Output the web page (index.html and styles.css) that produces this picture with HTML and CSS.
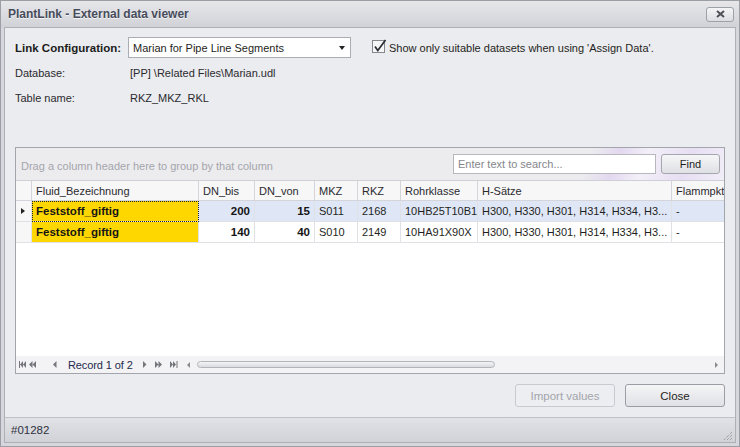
FILE: index.html
```html
<!DOCTYPE html>
<html>
<head>
<meta charset="utf-8">
<title>PlantLink - External data viewer</title>
<link rel="stylesheet" href="styles.css">
</head>
<body>
<div class="window">
  <div class="titlebar">
    <span class="title">PlantLink - External data viewer</span>
    <span class="closebtn"><svg width="9" height="8" viewBox="0 0 9 8"><path d="M1 1L8 7M8 1L1 7" stroke="#4e5058" stroke-width="2" fill="none"/></svg></span>
  </div>
  <div class="client">
    <div class="content">
      <div class="row-config">
        <span class="lbl-bold">Link Configuration:</span>
        <div class="combo"><span>Marian for Pipe Line Segments</span><span class="caret"></span></div>
        <label class="check">
          <svg class="checkbox" width="15" height="14" viewBox="0 0 15 14"><rect x="0.5" y="1.5" width="12" height="12" fill="#f6f6f7" stroke="#85878d"/><path d="M3 7.5L5.8 11.5L13.5 1" stroke="#2c2e33" stroke-width="1.7" fill="none"/></svg>
          <span>Show only suitable datasets when using 'Assign Data'.</span>
        </label>
      </div>
      <div class="row-info first"><span class="lbl">Database:</span><span class="val">[PP] \Related Files\Marian.udl</span></div>
      <div class="row-info second"><span class="lbl">Table name:</span><span class="val">RKZ_MKZ_RKL</span></div>

      <div class="grid">
        <div class="grouppanel">
          <span class="hint">Drag a column header here to group by that column</span>
          <div class="search">
            <span class="searchbox">Enter text to search...</span>
            <span class="findbtn">Find</span>
          </div>
        </div>
        <div class="grow header">
          <div class="cell ind"></div>
          <div class="cell">Fluid_Bezeichnung</div>
          <div class="cell">DN_bis</div>
          <div class="cell">DN_von</div>
          <div class="cell">MKZ</div>
          <div class="cell">RKZ</div>
          <div class="cell">Rohrklasse</div>
          <div class="cell">H-Sätze</div>
          <div class="cell">Flammpkt</div>
        </div>
        <div class="grow data focused">
          <div class="cell ind"><span class="rowarrow"></span></div>
          <div class="cell fluid focus">Feststoff_giftig</div>
          <div class="cell num">200</div>
          <div class="cell num">15</div>
          <div class="cell">S011</div>
          <div class="cell">2168</div>
          <div class="cell">10HB25T10B1</div>
          <div class="cell">H300, H330, H301, H314, H334, H3...</div>
          <div class="cell">-</div>
        </div>
        <div class="grow data">
          <div class="cell ind"></div>
          <div class="cell fluid">Feststoff_giftig</div>
          <div class="cell num">140</div>
          <div class="cell num">40</div>
          <div class="cell">S010</div>
          <div class="cell">2149</div>
          <div class="cell">10HA91X90X</div>
          <div class="cell">H300, H330, H301, H314, H334, H3...</div>
          <div class="cell">-</div>
        </div>
        <div class="gempty"></div>
        <div class="navbar">
          <svg class="nav n-first" width="7" height="7" viewBox="0 0 7 7"><path d="M0 0h1v7H0zM4 0v7L1 3.5zM7 0v7L4 3.5z"/></svg>
          <svg class="nav n-pprev" width="7" height="7" viewBox="0 0 7 7"><path d="M3.5 0v7L0 3.5zM7 0v7L3.5 3.5z"/></svg>
          <svg class="nav n-prev" width="4" height="7" viewBox="0 0 4 7"><path d="M3.5 0v7L0 3.5z"/></svg>
          <span class="record">Record 1 of 2</span>
          <svg class="nav n-next" width="4" height="7" viewBox="0 0 4 7"><path d="M0 0v7L3.5 3.5z"/></svg>
          <svg class="nav n-pnext" width="7" height="7" viewBox="0 0 7 7"><path d="M0 0v7L3.5 3.5zM3.5 0v7L7 3.5z"/></svg>
          <svg class="nav n-last" width="8" height="7" viewBox="0 0 8 7"><path d="M0 0v7L3 3.5zM3 0v7L6 3.5zM6.5 0h1v7h-1z"/></svg>
          <div class="hscroll">
            <svg class="sarrow" width="3" height="6" viewBox="0 0 3 6"><path d="M3 0v6L0 3z"/></svg>
            <span class="thumb"></span>
            <span class="track"></span>
            <svg class="sarrow" width="3" height="6" viewBox="0 0 3 6"><path d="M0 0v6L3 3z"/></svg>
          </div>
        </div>
      </div>

      <div class="buttons">
        <span class="btn disabled">Import values</span>
        <span class="btn">Close</span>
      </div>
    </div>
    <div class="statusbar">
      <span class="status">#01282</span>
      <svg class="grip" width="10" height="10" viewBox="0 0 10 10"><path d="M9 1L1 9M9 4L4 9M9 7L7 9" stroke="#8a8c93" stroke-width="1" stroke-dasharray="1 1" fill="none"/></svg>
    </div>
  </div>
</div>
</body>
</html>
```

FILE: styles.css
```css
* { box-sizing: border-box; }
html, body { margin: 0; padding: 0; }
body {
  width: 740px; height: 447px; overflow: hidden;
  font-family: "Liberation Sans", Arial, sans-serif;
  font-size: 11px; color: #1f1f22;
  background: #d5d6db;
}
.window {
  width: 740px; height: 447px;
  border: 1px solid #9c9ea6;
  background: #d6d7dc;
  display: flex; flex-direction: column;
}
.titlebar {
  height: 26px; flex: none;
  display: flex; align-items: center; justify-content: space-between;
  padding: 0 5px 0 7px;
  background: linear-gradient(#e7e7ea, #d1d2d7);
}
.title {
  font-weight: bold; font-size: 12px; color: #474c5b;
  text-shadow: 0 1px 0 rgba(255,255,255,0.75);
}
.closebtn {
  width: 28px; height: 15px;
  border: 1px solid #9fa1a8; border-radius: 3px;
  background: linear-gradient(#f5f5f7, #dcdde2);
  display: flex; align-items: center; justify-content: center;
}
.client {
  flex: 1;
  margin: 0 3px 3px;
  border: 1px solid #aeb0b7;
  background: #ebecef;
  display: flex; flex-direction: column;
}
.content {
  flex: 1;
  padding: 9px 10px 0;
  display: flex; flex-direction: column;
}
.row-config {
  height: 21px; display: flex; align-items: center;
}
.lbl-bold {
  width: 113px; font-weight: bold; font-size: 11.5px; color: #1c1c20;
}
.combo {
  width: 223px; height: 21px;
  border: 1px solid #abadb3; background: #fff;
  display: flex; align-items: center; justify-content: space-between;
  padding: 0 4px 0 4px;
}
.caret {
  width: 0; height: 0;
  border-left: 3.5px solid transparent; border-right: 3.5px solid transparent;
  border-top: 4px solid #222;
  margin-right: 1px;
}
.check {
  margin-left: 21px;
  display: flex; align-items: center;
}
.checkbox { margin-top: -3px; overflow: visible; }
.check span { margin-left: 2px; }
.row-info {
  height: 18px; display: flex; align-items: center; color: #2a2a2e;
}
.row-info.first { margin-top: 6px; }
.row-info.second { margin-top: 7px; }
.lbl { width: 115px; }

.grid {
  margin-top: 40px;
  height: 227px;
  border: 1px solid #a3a5ad;
  background: #fff;
  display: flex; flex-direction: column;
}
.grouppanel {
  height: 33px; flex: none;
  border-bottom: 1px solid #cfd0d5;
  display: flex; align-items: center; justify-content: space-between;
  padding: 0 4px 0 5px;
  background:
    linear-gradient(112deg, rgba(236,236,239,0) 0%, rgba(236,236,239,0) 80%, rgba(226,214,240,0.9) 84%, rgba(244,240,249,0.9) 88%, rgba(230,220,243,0.9) 94%, rgba(242,238,248,0.9) 100%),
    #ececef;
}
.hint { color: #a4a5ab; margin-top: 3px; }
.search { display: flex; align-items: center; gap: 5px; }
.searchbox {
  width: 203px; height: 20px;
  border: 1px solid #b6b8be; background: #fff;
  color: #85868c; padding-left: 4px;
  display: flex; align-items: center;
}
.findbtn {
  width: 59px; height: 20px;
  border: 1px solid #a5a7ae; border-radius: 3px;
  background: linear-gradient(#f6f6f8, #dfe0e4);
  display: flex; align-items: center; justify-content: center;
  color: #1f1f22;
}
.grow {
  display: grid; flex: none;
  grid-template-columns: 16px 167px 56px 60px 43px 43px 77px 194px 52px;
}
.grow.header { height: 20px; background: #f7f7f8; }
.grow.data { height: 21px; }
.cell {
  display: flex; align-items: center;
  padding: 0 4px;
  white-space: nowrap; overflow: hidden;
  border-right: 1px solid #dcdde1;
  border-bottom: 1px solid #dcdde1;
}
.cell:last-child { border-right: none; }
.header .cell { border-color: #d4d5da; color: #2a2a2e; }
.ind { padding: 0; justify-content: center; background: #f7f7f8; }
.header .ind { background: #f7f7f8; }
.focused .cell { background: #dfe7f7; }
.focused .ind { background: #f7f7f8; }
.data .cell { border-color: #e0e1e5; }
.cell.fluid { background: #ffd700 !important; font-weight: bold; font-size: 11.5px; color: #151515; }
.cell.focus { outline: 1px dotted #222; outline-offset: -1px; }
.cell.num { justify-content: flex-end; font-weight: bold; font-size: 11.5px; color: #151515; }
.rowarrow {
  width: 0; height: 0;
  border-top: 3.5px solid transparent; border-bottom: 3.5px solid transparent;
  border-left: 4px solid #222;
  margin-left: -1px;
}
.gempty { flex: 1; background: #fff; }
.navbar {
  height: 17px; flex: none;
  background: #f3f3f5;
  display: flex; align-items: center;
  padding-left: 3px;
}
.nav { fill: #76777d; flex: none; }
.n-pprev { margin-left: 3px; }
.n-prev { margin-left: 17px; }
.record { margin-left: 11px; color: #1f2a4d; font-size: 11px; letter-spacing: -0.1px; }
.n-next { margin-left: 10px; }
.n-pnext { margin-left: 8px; }
.n-last { margin-left: 8px; }
.hscroll {
  flex: 1; display: flex; align-items: center;
  margin-left: 9px; padding-right: 6px;
}
.sarrow { fill: #8a8b91; flex: none; }
.thumb {
  width: 298px; height: 7px; margin-left: 7px;
  border: 1px solid #b3b4ba; border-radius: 4px;
  background: linear-gradient(#f4f4f6, #dadbdf);
}
.track { flex: 1; }

.buttons {
  margin-top: 10px; height: 23px;
  display: flex; justify-content: flex-end; gap: 10px;
}
.btn {
  width: 100px; height: 23px;
  border: 1px solid #9b9da4; border-radius: 3px;
  background: linear-gradient(#f5f5f7, #e0e1e5);
  display: flex; align-items: center; justify-content: center;
  color: #1f1f22; font-size: 11.5px;
}
.btn.disabled {
  border-color: #c9cad0;
  background: #eceef1;
  color: #a3a4ab;
}
.statusbar {
  height: 25px; flex: none;
  border-top: 1px solid #c0c1c7;
  background: linear-gradient(#e1e2e6, #d1d2d7);
  display: flex; align-items: center; justify-content: space-between;
  padding: 0 2px 0 6px;
}
.status { color: #2e3040; font-size: 11.5px; }
.grip { align-self: flex-end; margin-bottom: 1px; }
```
